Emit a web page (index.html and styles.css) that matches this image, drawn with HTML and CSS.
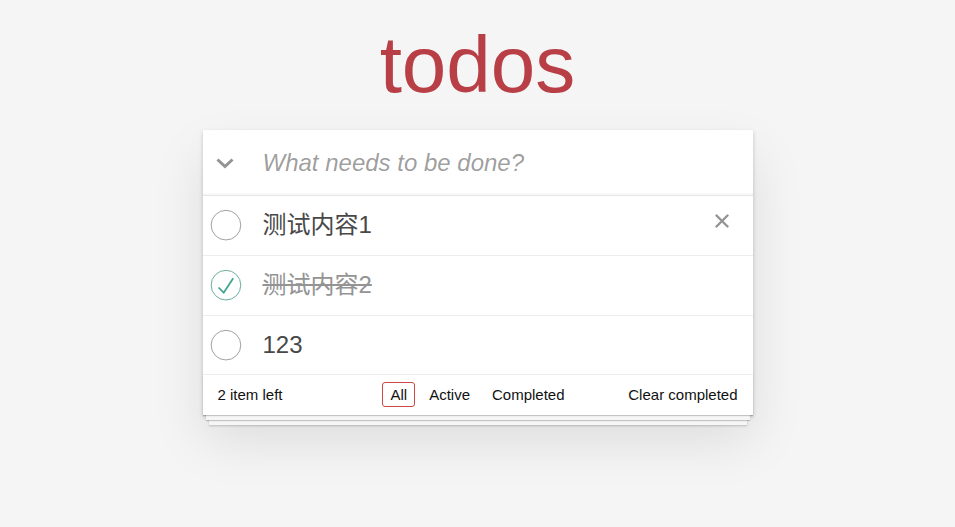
FILE: index.html
```html
<!DOCTYPE html>
<html lang="zh">
<head>
<meta charset="utf-8">
<title>todos</title>
<link rel="stylesheet" href="styles.css">
</head>
<body>
<section class="todoapp">
  <header class="header">
    <h1 class="title">todos</h1>
  </header>
  <div class="card">
    <div class="new-row">
      <span class="toggle-all">
        <svg width="18" height="11" viewBox="0 0 18 11"><polyline points="1.5,1.5 9,8.5 16.5,1.5" fill="none" stroke="#949494" stroke-width="3"/></svg>
      </span>
      <input class="new-todo" placeholder="What needs to be done?">
    </div>
    <ul class="todo-list">
      <li class="todo">
        <svg class="toggle" width="40" height="40" viewBox="-10 -18 100 135"><circle cx="50" cy="50" r="50" fill="none" stroke="#949494" stroke-width="3"/></svg>
        <label class="todo-label">测试内容1</label>
        <span class="destroy"><svg width="14" height="14" viewBox="0 0 14 14"><path d="M1.5 1.5L12.5 12.5M12.5 1.5L1.5 12.5" stroke="#949494" stroke-width="2.4" stroke-linecap="round"/></svg></span>
      </li>
      <li class="todo completed">
        <svg class="toggle" width="40" height="40" viewBox="-10 -18 100 135"><circle cx="50" cy="50" r="50" fill="none" stroke="#59A193" stroke-width="3"/><path fill="#3EA390" d="M72 25L42 71 27 56l-4 4 20 20 34-52z"/></svg>
        <label class="todo-label">测试内容2</label>
      </li>
      <li class="todo">
        <svg class="toggle" width="40" height="40" viewBox="-10 -18 100 135"><circle cx="50" cy="50" r="50" fill="none" stroke="#949494" stroke-width="3"/></svg>
        <label class="todo-label">123</label>
      </li>
    </ul>
    <footer class="footer">
      <span class="todo-count">2 item left</span>
      <ul class="filters">
        <li><a class="filter selected">All</a></li>
        <li><a class="filter">Active</a></li>
        <li><a class="filter">Completed</a></li>
      </ul>
      <span class="clear-completed">Clear completed</span>
    </footer>
  </div>
</section>
</body>
</html>
```

FILE: styles.css
```css
html, body {
  margin: 0;
  padding: 0;
  min-height: 100%;
}
html {
  height: 100%;
}
body {
  font: 14px "Liberation Sans", Arial, "Noto Sans CJK SC", sans-serif;
  line-height: 1.4em;
  background: #f5f5f5;
  color: #111;
}
.todoapp {
  width: 550px;
  margin: 0 auto;
  padding-bottom: 40px;
}
.title {
  margin: 0;
  height: 130px;
  font-size: 80px;
  line-height: 130px;
  font-weight: 200;
  text-align: center;
  color: #b83f45;
}
.card {
  background: #fff;
  box-shadow: 0 2px 4px 0 rgba(0, 0, 0, 0.2), 0 25px 50px 0 rgba(0, 0, 0, 0.1);
}
.new-row {
  display: flex;
  align-items: center;
  height: 65px;
  box-shadow: inset 0 -2px 1px rgba(0, 0, 0, 0.03);
}
.toggle-all {
  width: 45px;
  display: flex;
  justify-content: center;
  margin-top: 1px;
}
.new-todo {
  flex: 1;
  box-sizing: border-box;
  height: 65px;
  margin: 0;
  padding: 16px 16px 16px 15px;
  border: none;
  outline: none;
  background: transparent;
  font: inherit;
  font-size: 24px;
  line-height: 1.4em;
  color: inherit;
}
.new-todo::placeholder {
  font-style: italic;
  font-weight: 400;
  color: rgba(0, 0, 0, 0.4);
}
.todo-list {
  margin: 0;
  padding: 0;
  list-style: none;
  border-top: 1px solid #e6e6e6;
}
.todo {
  display: flex;
  align-items: center;
  font-size: 24px;
  border-bottom: 1px solid #ededed;
}
.toggle {
  flex-shrink: 0;
  display: block;
}
.todo-label {
  flex: 1;
  padding: 15px 15px 15px 20px;
  line-height: 1.2;
  font-weight: 400;
  color: #484848;
  word-break: break-all;
}
.completed .todo-label {
  color: #949494;
  text-decoration: line-through;
}
.destroy {
  width: 40px;
  height: 40px;
  margin-right: 10px;
  display: flex;
  align-items: center;
  justify-content: center;
  padding-bottom: 8px;
  box-sizing: border-box;
}
.destroy svg {
  display: block;
  margin-left: -1px;
}
.footer {
  display: grid;
  grid-template-columns: 1fr auto 1fr;
  align-items: center;
  height: 20px;
  padding: 9px 15px 11px;
  font-size: 15px;
  box-shadow: 0 1px 1px rgba(0, 0, 0, 0.2), 0 8px 0 -3px #f6f6f6, 0 9px 1px -3px rgba(0, 0, 0, 0.2), 0 16px 0 -6px #f6f6f6, 0 17px 2px -6px rgba(0, 0, 0, 0.2);
}
.todo-count {
  text-align: left;
}
.filters {
  display: flex;
  margin: 0;
  padding: 0;
  list-style: none;
}
.filter {
  margin: 3px;
  padding: 3px 7px;
  border: 1px solid transparent;
  border-radius: 3px;
  color: inherit;
  text-decoration: none;
}
.filter.selected {
  border-color: #ce4646;
}
.clear-completed {
  justify-self: end;
  line-height: 19px;
}
```
